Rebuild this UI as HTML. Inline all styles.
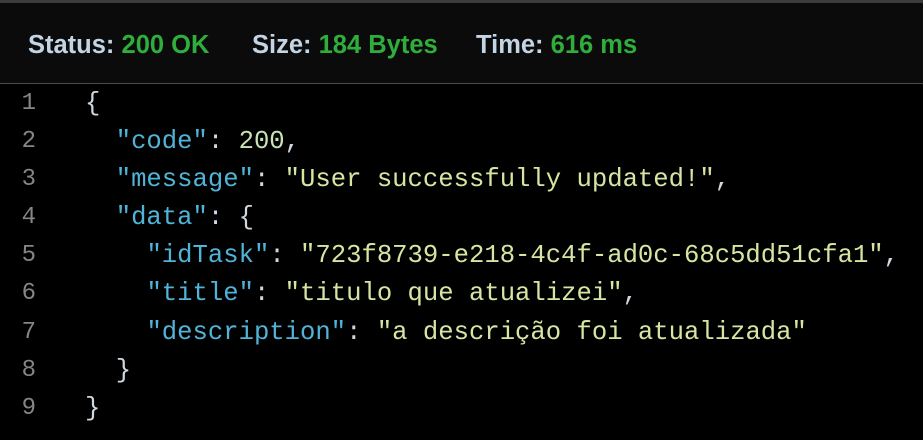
<!DOCTYPE html>
<html><head><meta charset="utf-8"><style>
html,body{margin:0;padding:0;background:#000;width:923px;height:440px;overflow:hidden}
.top{position:absolute;left:0;top:0;width:923px;height:3px;background:#3c3c3c}
.hdr{position:absolute;left:0;top:3px;width:923px;height:80px;background:#0b0b0b}
.sep{position:absolute;left:0;top:83px;width:923px;height:1px;background:#4a4a4a}
.h{position:absolute;top:31px;font:600 25.5px "Liberation Sans",sans-serif;color:#c3d4e4;white-space:nowrap}
.h b{font-weight:600;color:#2fae3c}
.ln{position:absolute;left:0;top:85px;width:36px;text-align:right;color:#858585;font:24px/38.1px "Liberation Mono",monospace;white-space:pre}
.tx{position:absolute;left:85px;top:85px;font:25.6px/38.1px "Liberation Mono",monospace;white-space:pre;color:#d4d4d4}
.k{color:#4fb4d8}.s{color:#d5e6a3}.n{color:#c8e4b4}.p{color:#cfd8e0}
</style></head><body>
<div class="top"></div><div class="hdr"></div><div class="sep"></div>
<div class="h" style="left:28px">Status: <b>200 OK</b></div>
<div class="h" style="left:252px">Size: <b>184 Bytes</b></div>
<div class="h" style="left:476px">Time: <b>616 ms</b></div>
<div class="ln">1
2
3
4
5
6
7
8
9</div>
<div class="tx"><span class="p">{</span>
  <span class="k">"code"</span><span class="p">: </span><span class="n">200</span><span class="p">,</span>
  <span class="k">"message"</span><span class="p">: </span><span class="s">"User successfully updated!"</span><span class="p">,</span>
  <span class="k">"data"</span><span class="p">: {</span>
    <span class="k">"idTask"</span><span class="p">: </span><span class="s">"723f8739-e218-4c4f-ad0c-68c5dd51cfa1"</span><span class="p">,</span>
    <span class="k">"title"</span><span class="p">: </span><span class="s">"titulo que atualizei"</span><span class="p">,</span>
    <span class="k">"description"</span><span class="p">: </span><span class="s">"a descrição foi atualizada"</span>
  <span class="p">}</span>
<span class="p">}</span></div>
</body></html>
